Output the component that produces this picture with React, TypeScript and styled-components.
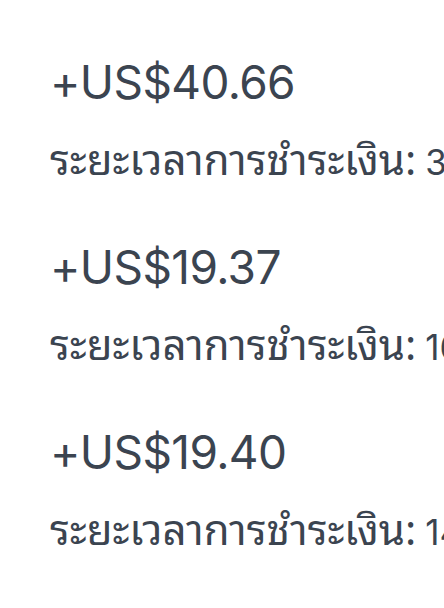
import React from "react";
import styled, { createGlobalStyle } from "styled-components";

const Global = createGlobalStyle`
  html, body { margin: 0; padding: 0; background: #ffffff; }
  body { width: 444px; height: 608px; overflow: hidden; }
`;

const List = styled.div`
  display: flex;
  flex-direction: column;
  gap: 51px;
  padding: 50px 0 0 50px;
  white-space: nowrap;
  overflow: hidden;
  font-family: Inter, "Noto Sans Thai Looped", sans-serif;
  color: #3b4450;
`;

const Entry = styled.div`
  display: flex;
  flex-direction: column;
  gap: 14px;
`;

const Amount = styled.div`
  font-size: 46px;
  line-height: 64px;
  font-weight: 400;
  letter-spacing: -0.6px;
`;

const Period = styled.div`
  display: flex;
  align-items: baseline;
  line-height: 56px;
  height: 56px;
`;

const Label = styled.span`
  font-family: "Noto Sans Thai Looped", Inter, sans-serif;
  font-size: 42px;
`;

const Value = styled.span`
  font-family: Inter, sans-serif;
  font-size: 35px;
  margin-left: 9px;
`;

const data = [
  { amount: "+US$40.66", days: "30 วัน" },
  { amount: "+US$19.37", days: "16 วัน" },
  { amount: "+US$19.40", days: "14 วัน" },
];

export default function App() {
  return (
    <>
      <Global />
      <List>
        {data.map((d) => (
          <Entry key={d.amount}>
            <Amount>{d.amount}</Amount>
            <Period>
              <Label>ระยะเวลาการชำระเงิน:</Label>
              <Value>{d.days}</Value>
            </Period>
          </Entry>
        ))}
      </List>
    </>
  );
}
